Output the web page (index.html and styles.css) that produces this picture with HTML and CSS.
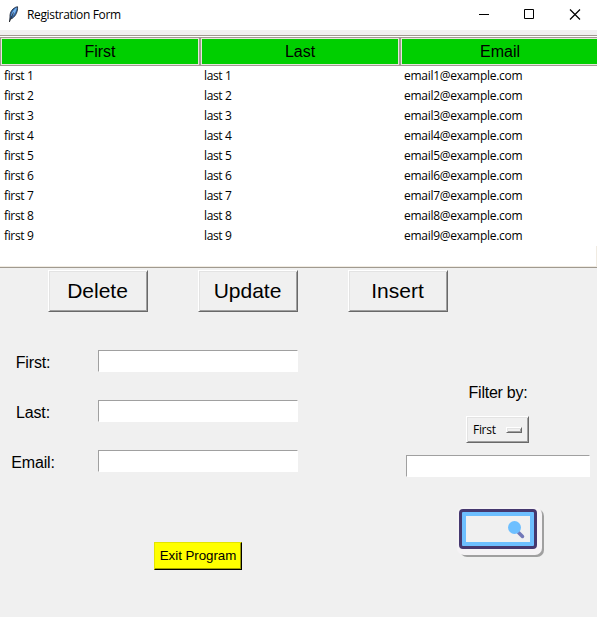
FILE: index.html
```html
<!DOCTYPE html>
<html lang="en">
<head>
<meta charset="utf-8">
<title>Registration Form</title>
<link rel="stylesheet" href="styles.css">
</head>
<body>
<div class="window">
  <header class="titlebar">
    <svg class="feather" width="12" height="17" viewBox="0 0 12 17">
      <path d="M1.5 16 2 11C1.5 6 5 1.500 9.500 .7 10 5 8 10 4 12.500L2.500 13" fill="#3568a8" stroke="#17202e" stroke-width=".8"/>
      <path d="M3.200 10.500C3.500 6.500 6 3 8.800 1.600 8.500 5 6.500 8.500 3.200 10.500Z" fill="#78b4f0"/>
      <path d="M1.300 16 5.500 6.500" fill="none" stroke="#222" stroke-width=".8"/>
    </svg>
    <span class="caption">Registration Form</span>
    <svg class="controls" width="104" height="12" viewBox="0 0 104 12" fill="none" stroke="#000" stroke-width="1">
      <path d="M0 5.500H10M45.500 .5h9v9h-9z"/>
      <path d="M91 .5l10 10M101 .5l-10 10" stroke-width="1.200"/>
    </svg>
  </header>
  <section class="tree">
    <div class="heads"><div class="head">First</div><div class="head">Last</div><div class="head">Email</div></div>
    <div class="rows">
      <div class="row"><span>first 1</span><span>last 1</span><span class="mail">email1@example.com</span></div>
      <div class="row"><span>first 2</span><span>last 2</span><span class="mail">email2@example.com</span></div>
      <div class="row"><span>first 3</span><span>last 3</span><span class="mail">email3@example.com</span></div>
      <div class="row"><span>first 4</span><span>last 4</span><span class="mail">email4@example.com</span></div>
      <div class="row"><span>first 5</span><span>last 5</span><span class="mail">email5@example.com</span></div>
      <div class="row"><span>first 6</span><span>last 6</span><span class="mail">email6@example.com</span></div>
      <div class="row"><span>first 7</span><span>last 7</span><span class="mail">email7@example.com</span></div>
      <div class="row"><span>first 8</span><span>last 8</span><span class="mail">email8@example.com</span></div>
      <div class="row"><span>first 9</span><span>last 9</span><span class="mail">email9@example.com</span></div>
    </div>
    <div class="tail"></div>
  </section>
  <div class="actions">
    <button class="raised action">Delete</button>
    <button class="raised action">Update</button>
    <button class="raised action">Insert</button>
  </div>
  <main class="lower">
    <div class="form">
      <label class="field"><span class="name">First:</span><input class="entry"></label>
      <label class="field"><span class="name">Last:</span><input class="entry"></label>
      <label class="field"><span class="name">Email:</span><input class="entry"></label>
      <button class="exit">Exit Program</button>
    </div>
    <div class="filter">
      <div class="filter-label">Filter by:</div>
      <button class="raised option"><span>First</span><i class="indicator"></i></button>
      <input class="entry filter-entry" aria-label="Filter">
      <svg class="search" width="90" height="52" viewBox="0 0 90 52">
        <rect x="5" y="3" width="84" height="48" rx="7" fill="#a0a0a0"/>
        <rect x="2" y="1" width="85" height="48" rx="7" fill="#f5f3f5"/>
        <rect x="5.500" y="4.500" width="75" height="37" rx="2.500" fill="#6dbfff" stroke="#45386f" stroke-width="3"/>
        <rect x="11" y="10" width="64" height="26" fill="#f0f0f0"/>
        <path d="M63.500 26.500 67.500 30.500" stroke="#7278b8" stroke-width="3.500" stroke-linecap="round"/>
        <circle cx="59.500" cy="21.500" r="6.500" fill="#6dbfff"/>
      </svg>
    </div>
  </main>
</div>
</body>
</html>
```
FILE: styles.css
```css
* { box-sizing: border-box; }
body { margin: 0; background: #f0f0f0; color: #000; font: 12px/20px "Open Sans", sans-serif; overflow: hidden; }
button, input { margin: 0; padding: 0; border-radius: 0; color: #000; }
.window { width: 597px; height: 617px; overflow: hidden; }
.titlebar { height: 30px; background: #fff; display: flex; align-items: center; padding: 0 14px 0 8px; }
.feather { margin: -2px 7px 0 0; }
.caption { flex: 1; letter-spacing: -.35px; }
.tree { height: 233px; margin-top: 5px; background: #fff; border-top: 1px solid #a09a90; border-bottom: 1px solid #a09a90; padding-top: 1px; }
.heads { display: flex; width: 600px; height: 29px; }
.head { width: 200px; background: #00cf00; border: 1px solid #a09a90; box-shadow: inset 0 0 0 1px #e8e4dc; text-align: center; font: 16px/27px "Liberation Sans", sans-serif; }
.row { height: 20px; display: grid; grid-template-columns: 200px 200px 197px; letter-spacing: -.35px; }
.row span { padding-left: 4px; }
.row .mail { letter-spacing: -.28px; }
.tail { height: 21px; border-right: 1px solid #f0ebe2; border-bottom: 1px solid #f0ebe2; }
.raised { background: #f0f0f0; border: 1px solid; border-color: #fff #696969 #696969 #fff; box-shadow: inset 1px 1px #e3e3e3, inset -1px -1px #a0a0a0; }
.actions { display: flex; gap: 50px; padding: 2px 0 0 48px; }
.action { width: 100px; height: 42px; font: 21px/40px "Liberation Sans", sans-serif; padding-right: 1px; }
.lower { display: flex; }
.form { width: 406px; padding-top: 38px; }
.field { display: flex; height: 50px; align-items: flex-start; }
.name { width: 66px; margin-right: 32px; text-align: center; font: 16px/25px "Liberation Sans", sans-serif; letter-spacing: -.15px; }
.entry { display: block; width: 200px; height: 22px; background: #fff; border: 1px solid; border-color: #a0a0a0 #fff #fff #a0a0a0; }
.exit { display: block; width: 88px; height: 28px; margin: 42px 0 0 154px; background: #ff0; border: 1px solid; border-color: #e4e400 #000 #000 #e4e400; box-shadow: inset -1px -1px #a0a000; font: 13.333px/26px "Liberation Sans", sans-serif; letter-spacing: -.05px; }
.filter { width: 184px; padding-top: 68px; display: flex; flex-direction: column; align-items: center; }
.filter-label { font: 16px/25px "Liberation Sans", sans-serif; letter-spacing: -.25px; }
.option { width: 63px; height: 27px; margin: 11px 1px 0 0; padding: 0 6px; display: flex; align-items: center; justify-content: space-between; font: 12px/25px "Open Sans", sans-serif; letter-spacing: -.3px; }
.indicator { width: 16px; height: 6px; border: 1px solid; border-color: #fff #696969 #696969 #fff; box-shadow: inset 1px 1px #e3e3e3, inset -1px -1px #a0a0a0; }
.filter-entry { width: 184px; margin-top: 12px; }
.search { margin: 29px 0 0 4px; }
```
